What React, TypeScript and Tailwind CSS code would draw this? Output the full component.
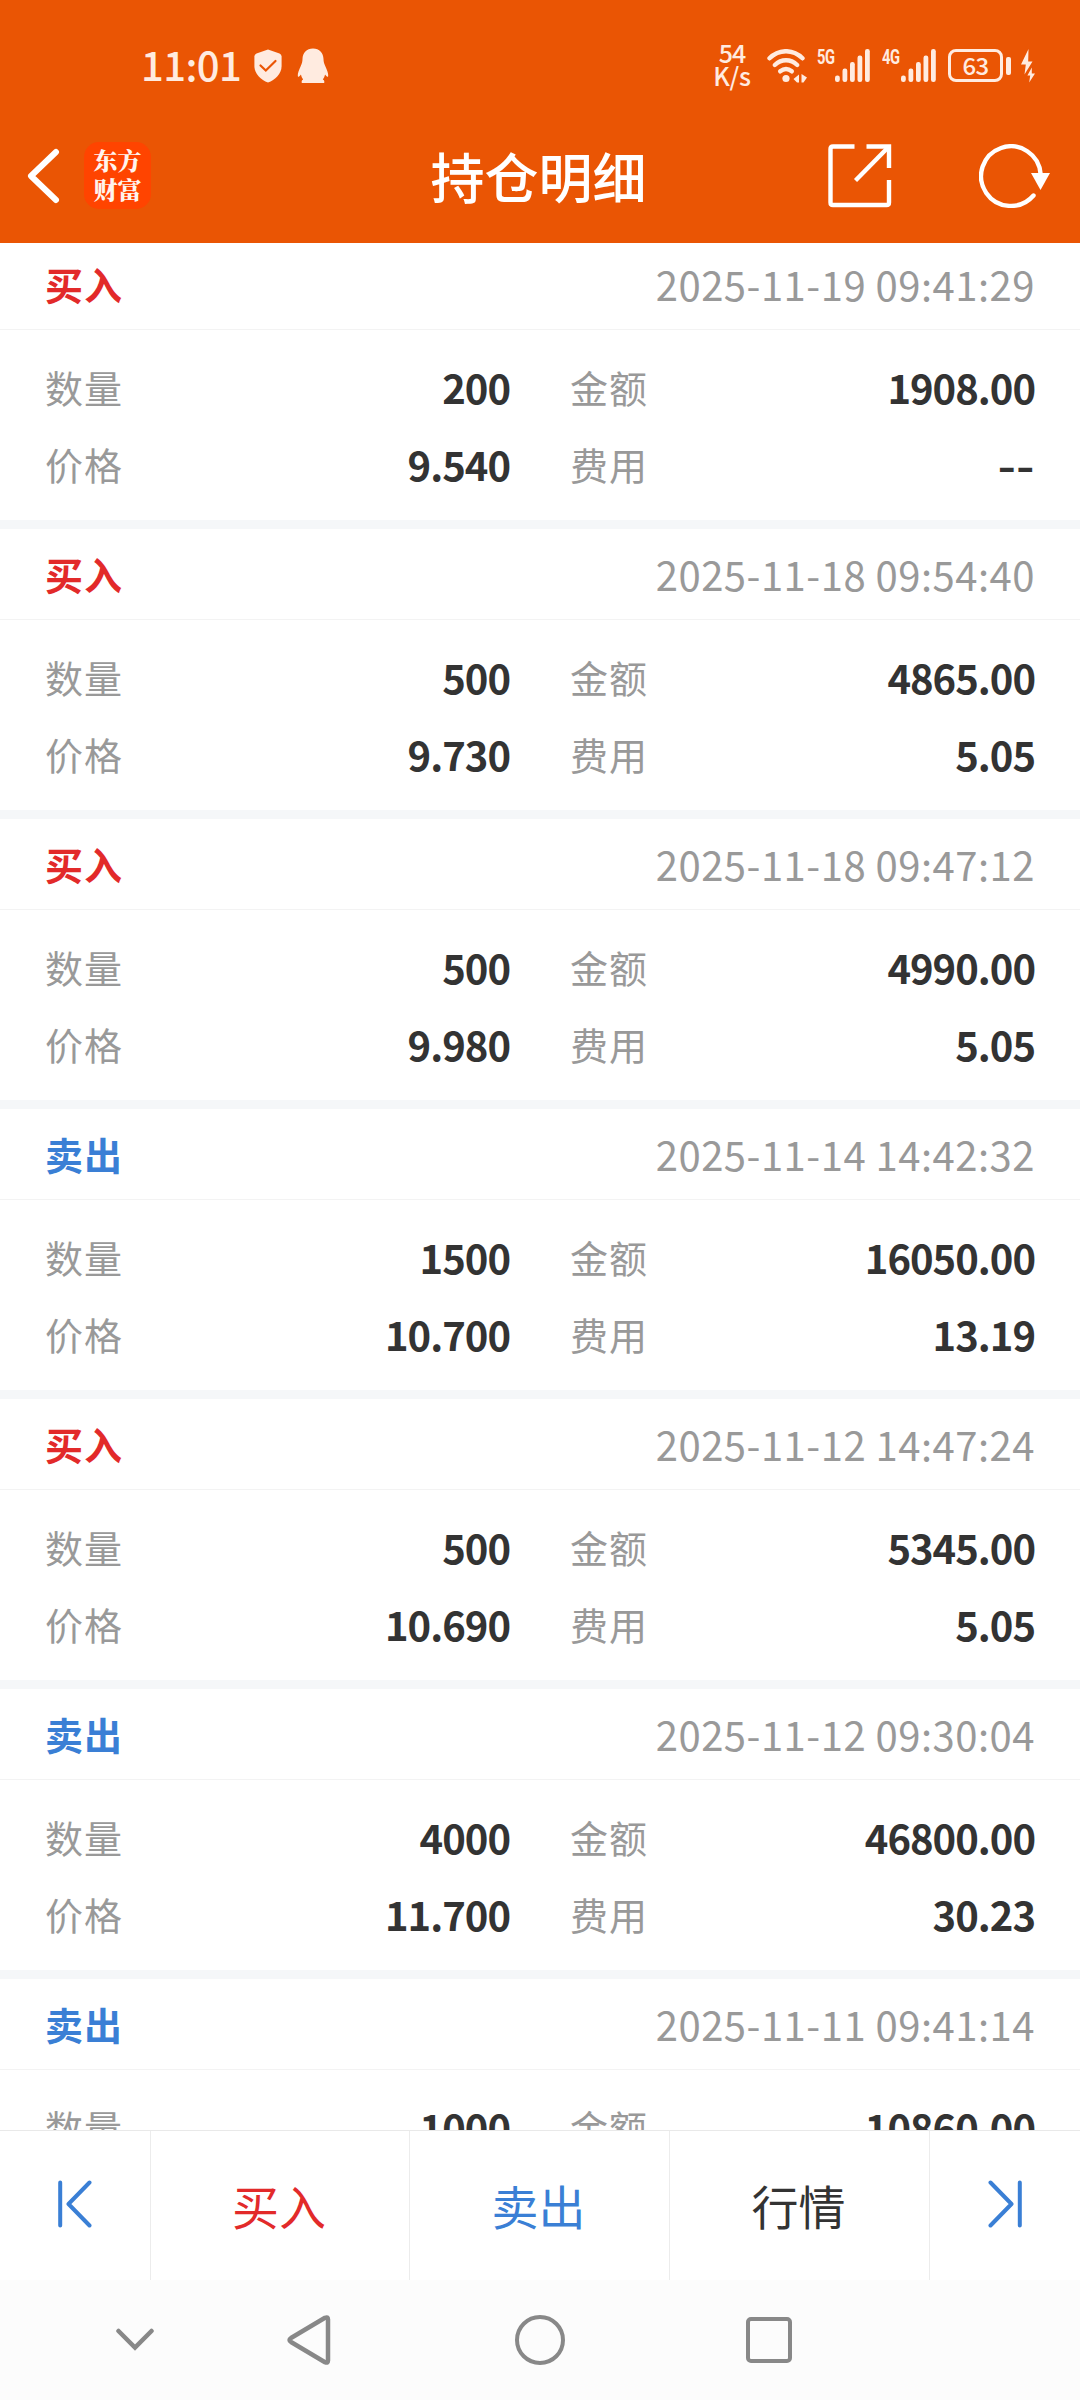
import React from 'react';

type Side = 'buy' | 'sell';

interface Trade {
  side: Side;
  time: string;
  quantity: string;
  amount: string;
  price?: string;
  fee?: string;
}

const trades: Trade[] = [
  { side: 'buy', time: '2025-11-19 09:41:29', quantity: '200', price: '9.540', amount: '1908.00', fee: '--' },
  { side: 'buy', time: '2025-11-18 09:54:40', quantity: '500', price: '9.730', amount: '4865.00', fee: '5.05' },
  { side: 'buy', time: '2025-11-18 09:47:12', quantity: '500', price: '9.980', amount: '4990.00', fee: '5.05' },
  { side: 'sell', time: '2025-11-14 14:42:32', quantity: '1500', price: '10.700', amount: '16050.00', fee: '13.19' },
  { side: 'buy', time: '2025-11-12 14:47:24', quantity: '500', price: '10.690', amount: '5345.00', fee: '5.05' },
  { side: 'sell', time: '2025-11-12 09:30:04', quantity: '4000', price: '11.700', amount: '46800.00', fee: '30.23' },
  { side: 'sell', time: '2025-11-11 09:41:14', quantity: '1000', amount: '10860.00' },
];

const SignalBars = () => (
  <svg width="35" height="34" viewBox="0 0 35 34" fill="currentColor">
    <rect x="0" y="26.5" width="4.8" height="6.5" rx="2.2" />
    <rect x="7.5" y="19.5" width="4.8" height="13.5" rx="2.2" />
    <rect x="15" y="13" width="4.8" height="20" rx="2.2" />
    <rect x="22.5" y="6.5" width="4.8" height="26.5" rx="2.2" />
    <rect x="30" y="0" width="4.8" height="33" rx="2.2" />
  </svg>
);

const StatusBar = () => (
  <div className="flex h-[111px] items-center pl-[141px] pr-[45px] pt-[20px] text-[#ffebe0]">
    <span className="-mt-[4px] w-[113px] text-[40px] font-medium leading-[40px] tracking-[-0.6px]">11:01</span>
    <svg width="28" height="34" viewBox="0 0 28 34" className="mr-[15px]">
      <path d="M14 0.5 L25.5 4.5 Q27.6 5.4 27.6 7.6 V17 C27.6 25 21 31 14 33.5 C7 31 0.4 25 0.4 17 V7.6 Q0.4 5.4 2.5 4.5Z" fill="currentColor" />
      <path d="M6.5 16.5 L11.8 21.5 L21.5 12" fill="none" stroke="#ea5504" strokeWidth="2.2" strokeLinecap="round" />
    </svg>
    <svg width="32" height="36" viewBox="0 0 32 36" fill="currentColor">
      <path d="M16 0.5 C22.5 0.5 26.3 5 26.5 11 C26.6 13.5 26.9 15 28 17.5 C29.8 21.500 31.500 25 31.200 28 C31 29.500 30 28.800 28 26.500 C27.600 28.600 27 30 25.800 31.400 C27.200 32.200 27.600 33 27.200 35 H4.800 C4.400 33 4.800 32.200 6.200 31.400 C5 30 4.400 28.600 4 26.500 C2 28.800 1 29.500 0.800 28 C0.500 25 2.200 21.500 4 17.500 C5.100 15 5.400 13.500 5.500 11 C5.700 5 9.500 0.500 16 0.500Z" />
    </svg>

    <div className="ml-auto flex items-center">
      <div className="-mt-[4px] mr-[16px] flex w-[38px] flex-col items-center text-[25px] font-medium leading-[23px]">
        <span className="tracking-[-1px]">54</span>
        <span className="tracking-[-0.3px]">K/s</span>
      </div>
      <svg width="41" height="34" viewBox="0 0 41 34" className="mr-[9px]">
        <g fill="none" stroke="currentColor" strokeWidth="4.4" strokeLinecap="round">
          <path d="M2.5 9.3 C12 -0.2 26 -0.2 35.5 9.3" />
          <path d="M7.8 16 C14.5 9.6 23.5 9.6 30.2 16" />
          <path d="M13.2 22.3 C16.8 19.4 21.2 19.4 24.8 22.3" />
        </g>
        <circle cx="19" cy="29.5" r="3.6" fill="currentColor" />
        <path d="M32 25.5 V33.5 H30 L26.5 30Z M34.5 25 L40 28.5 L36.5 33.5 H34.5Z" fill="currentColor" />
      </svg>
      <div className="flex w-[65px] items-start">
        <span className="w-[18px] font-['Roboto',sans-serif] text-[21px] font-bold leading-[16px] tracking-[-0.5px]">
          <span className="inline-block origin-left scale-x-[0.7]">5G</span>
        </span>
        <SignalBars />
      </div>
      <div className="flex w-[66px] items-start">
        <span className="w-[19px] font-['Roboto',sans-serif] text-[21px] font-bold leading-[16px] tracking-[-0.5px]">
          <span className="inline-block origin-left scale-x-[0.7]">4G</span>
        </span>
        <SignalBars />
      </div>
      <div className="flex h-[33px] w-[55px] items-center justify-center rounded-[8px] border-[3px] border-current text-[24px] font-medium leading-[24px] tracking-[-0.8px]">
        <span className="-mt-[2px]">63</span>
      </div>
      <div className="ml-[3px] h-[18px] w-[5px] rounded-[2px] bg-current" />
      <svg width="14" height="34" viewBox="0 0 14 34" fill="currentColor" className="ml-[10px]">
        <path d="M7.5 0 L0 15.5 H4.8 L3.5 25.5 L11.5 12.5 H7.2Z" />
        <path d="M10.8 18.5 L6.4 26.5 H9.2 L8.2 33.5 L14 24.5 H10.8Z" />
      </svg>
    </div>
  </div>
);

const TitleBar = () => (
  <div className="grid h-[132px] grid-cols-[1fr_auto_1fr] items-center pl-[26px] pr-[29px] text-white">
    <div className="-mt-[3px] flex items-center">
      <svg width="34" height="56" viewBox="0 0 34 56" fill="none" stroke="currentColor" strokeWidth="6" strokeLinejoin="round" strokeLinecap="round">
        <path d="M30 4 L5 28 L30 52" />
      </svg>
      <div className="ml-[24px] flex h-[67px] w-[67px] flex-col items-center justify-center rounded-[15px] bg-[#ff4400] font-['Noto_Serif_CJK_SC','Noto_Sans_CJK_SC',serif] text-[24px] font-black leading-[29px] text-[#fff4ee]">
        <span className="-mt-[4px]">东方</span>
        <span>财富</span>
      </div>
    </div>
    <h1 className="-mt-[3px] text-[54px] font-medium leading-[60px]">持仓明细</h1>
    <div className="flex items-center justify-end gap-[87px]">
      <svg width="64" height="64" viewBox="0 0 64 64" fill="none" stroke="currentColor" strokeWidth="4.4" className="-mt-[3px]">
        <path d="M26.5 2.5 H5 Q2.5 2.5 2.5 5 V58.5 Q2.5 61 5 61 H58.5 Q61 61 61 58.5 V36" />
        <path d="M38.5 2.5 H61 V24" />
        <path d="M27.5 36.5 L60 3.5" />
      </svg>
      <svg width="72" height="64" viewBox="0 0 72 64" className="-mt-[3px]">
        <path d="M61.6 30 A29.8 29.8 0 1 0 54.5 51.5" fill="none" stroke="currentColor" strokeWidth="4.4" strokeLinecap="round" />
        <path d="M52 29 H71 L61.5 46Z" fill="currentColor" />
      </svg>
    </div>
  </div>
);

const Field = ({ label, value }: { label: string; value: string }) => (
  <div className="flex h-[77px] items-center justify-between">
    <span className="-mt-[1px] text-[38px] tracking-[1px] text-[#999999]">{label}</span>
    {value === '--' ? (
      <span className="origin-right scale-x-[1.25] text-[40px] font-bold text-[#333333]">{value}</span>
    ) : (
      <span className="text-[40px] font-bold tracking-[-1px] text-[#333333]">{value}</span>
    )}
  </div>
);

const TradeCard: React.FC<{ trade: Trade }> = ({ trade }) => (
  <div className="h-[290px] shrink-0 border-b-[9px] border-[#f5f7f9] bg-white">
    <div className="flex h-[91px] items-center justify-between border-b border-[#f3f3f3] px-[45px]">
      <span className={`-mt-[2px] text-[38px] font-bold tracking-[1px] ${trade.side === 'buy' ? 'text-[#e22a2a]' : 'text-[#3a7fd5]'}`}>
        {trade.side === 'buy' ? '买入' : '卖出'}
      </span>
      <span className="text-[40px] tracking-[0.5px] text-[#999999]">{trade.time}</span>
    </div>
    <div className="grid grid-cols-2 gap-x-[60px] px-[45px] pt-[18px]">
      <Field label="数量" value={trade.quantity} />
      <Field label="金额" value={trade.amount} />
      {trade.price && <Field label="价格" value={trade.price} />}
      {trade.fee && <Field label="费用" value={trade.fee} />}
    </div>
  </div>
);

const ActionBar = () => (
  <div className="grid h-[150px] shrink-0 grid-cols-[151px_259px_260px_260px_150px] border-t border-[#e9e9e9] bg-white text-[47px]">
    <button className="flex items-center justify-center border-r border-[#ececec] pb-[4px] text-[#3a7fd5]">
      <svg width="34" height="48" viewBox="0 0 34 48" fill="none" stroke="currentColor" strokeWidth="4" strokeLinecap="round" strokeLinejoin="round">
        <path d="M2.2 2.5 V45.5 M31.5 2.5 L10.5 24 L31.5 45.5" />
      </svg>
    </button>
    <button className="border-r border-[#ececec] pr-[2px] text-[#e22a2a]">买入</button>
    <button className="border-r border-[#ececec] pr-[2px] text-[#3a7fd5]">卖出</button>
    <button className="border-r border-[#ececec] pr-[2px] text-[#333333]">行情</button>
    <button className="flex items-center justify-center pb-[4px] text-[#3a7fd5]">
      <svg width="34" height="48" viewBox="0 0 34 48" fill="none" stroke="currentColor" strokeWidth="4" strokeLinecap="round" strokeLinejoin="round">
        <path d="M31.8 2.5 V45.5 M2.5 2.5 L23.5 24 L2.5 45.5" />
      </svg>
    </button>
  </div>
);

const SystemNav = () => (
  <div className="flex h-[120px] shrink-0 items-center bg-[#fcfcfc] pl-[115px] text-[#888888]">
    <svg width="40" height="24" viewBox="0 0 40 24" fill="none" stroke="currentColor" strokeWidth="4.5" strokeLinecap="round">
      <path d="M3.5 3 L20 19.5 L36.5 3" />
    </svg>
    <svg width="46" height="52" viewBox="0 0 46 52" fill="none" stroke="currentColor" strokeWidth="4.5" strokeLinejoin="round" className="ml-[131px]">
      <path d="M5 24 L39 3.8 Q42 2.5 42 5.5 V46.5 Q42 49.5 39 48.2 L5 28 Q2 26 5 24Z" />
    </svg>
    <div className="ml-[183px] h-[50px] w-[50px] rounded-full border-4 border-current" />
    <div className="ml-[181px] h-[46px] w-[46px] rounded-[5px] border-4 border-current" />
  </div>
);

export default function App() {
  return (
    <div className="flex h-[2400px] w-[1080px] flex-col overflow-hidden bg-white font-['Noto_Sans_CJK_SC',sans-serif]">
      <header className="h-[243px] shrink-0 bg-[#ea5504]">
        <StatusBar />
        <TitleBar />
      </header>
      {/* list is scrolled a few pixels under the header */}
      <main className="flex min-h-0 flex-1 flex-col overflow-hidden">
        <div className="-mt-[4px] flex flex-col">
          {trades.map((trade) => (
            <TradeCard key={trade.time} trade={trade} />
          ))}
        </div>
      </main>
      <ActionBar />
      <SystemNav />
    </div>
  );
}
